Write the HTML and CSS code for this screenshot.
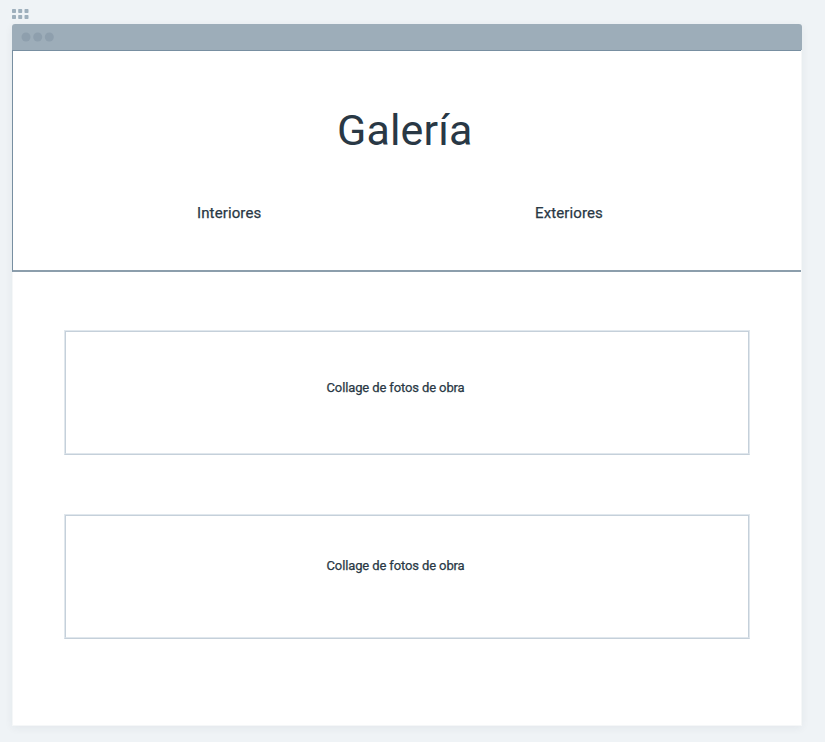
FILE: index.html
```html
<!DOCTYPE html>
<html lang="es">
<head>
<meta charset="utf-8">
<title>Galería</title>
<link rel="stylesheet" href="styles.css">
</head>
<body>
<svg class="grip" width="17" height="11" viewBox="0 0 17 11" fill="#9eafbc">
<rect x="0" y="0" width="4" height="4" rx=".7"/><rect x="6.2" y="0" width="4" height="4" rx=".7"/><rect x="12.5" y="0" width="4" height="4" rx=".7"/>
<rect x="0" y="6" width="4" height="4" rx=".7"/><rect x="6.2" y="6" width="4" height="4" rx=".7"/><rect x="12.5" y="6" width="4" height="4" rx=".7"/>
</svg>
<main class="window">
<div class="bar"><svg width="34" height="10" viewBox="0 0 34 10" fill="#8e9fad"><circle cx="5" cy="5" r="4.5"/><circle cx="16.7" cy="5" r="4.5"/><circle cx="28.3" cy="5" r="4.5"/></svg></div>
<header class="hero">
<h1>Galería</h1>
<nav><a class="in">Interiores</a><a class="ex">Exteriores</a></nav>
</header>
<section class="gallery">
<div class="box"><div class="inner">Collage de fotos de obra</div></div>
<div class="box second"><div class="inner">Collage de fotos de obra</div></div>
</section>
</main>
</body>
</html>
```
FILE: styles.css
```css
* { box-sizing: border-box; }
body { margin: 0; padding: 9px 12px 0; height: 742px; overflow: hidden; background: #eff3f6; font-family: Roboto, "Liberation Sans", sans-serif; color: #293845; }
.grip { display: block; margin-bottom: 4px; }
.window { width: 790px; height: 702px; background: #fff; border-radius: 4px 4px 0 0; border-right: 1px solid #f5f7f8; border-bottom: 1px solid #f5f7f8; box-shadow: 0 2px 8px rgba(41, 56, 69, .06); }
.bar { width: 790px; height: 26px; background: #9dadb9; border-radius: 3px 3px 0 0; padding: 8px 0 0 8.5px; }
.bar svg { display: block; }
.hero { height: 222px; border-top: 1px solid #788fa1; border-left: 1px solid #788fa1; border-bottom: 2px solid #8c9eac; padding-top: 54px; }
h1 { margin: 0; height: 50px; padding-left: 324px; font-size: 43px; line-height: 50px; font-weight: 400; letter-spacing: .15px; white-space: nowrap; }
nav { display: flex; padding-top: 48px; font-size: 15px; line-height: 20px; font-weight: 400; -webkit-text-stroke: .25px #293845; }
.in { width: 338px; margin-left: 184px; letter-spacing: .12px; }
.ex { letter-spacing: .12px; }
.gallery { height: 453px; padding: 58px 0 0 51px; border-left: 1px solid #f5f7f8; }
.box { width: 686px; height: 125px; border: 1px solid #e0e7ed; border-bottom-color: #c5d0da; }
.inner { height: 123px; border: 1px solid #c5d0da; border-bottom-color: #e0e7ed; padding: 46px 0 0 260.5px; font-size: 13px; line-height: 20px; font-weight: 400; letter-spacing: -.12px; -webkit-text-stroke: .25px #293845; }
.second { margin-top: 59px; }
.second .inner { padding-top: 40px; }
```
